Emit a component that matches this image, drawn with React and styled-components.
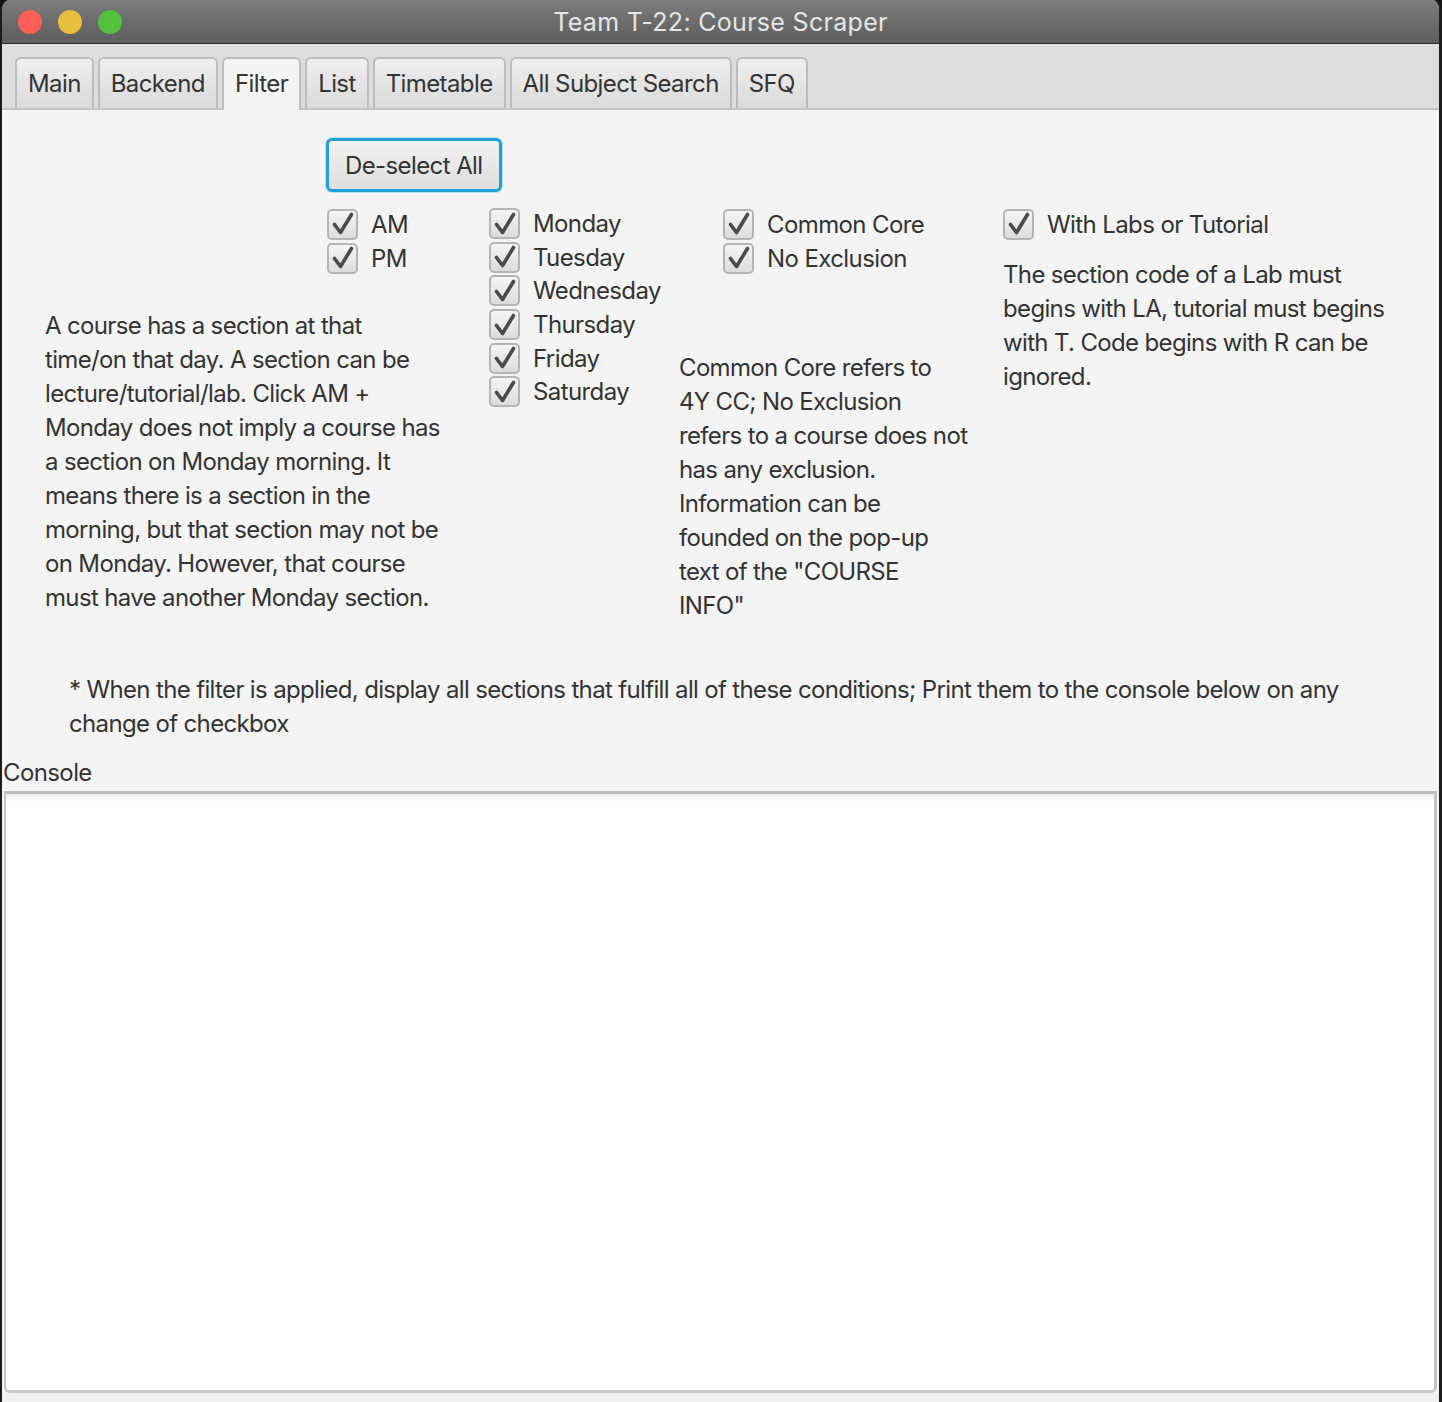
import React, { useState } from 'react';
import styled, { createGlobalStyle } from 'styled-components';

const GlobalStyle = createGlobalStyle`
  html, body {
    margin: 0;
    padding: 0;
    background: #151515;
  }
  body {
    font-family: Inter, "Noto Sans", "Liberation Sans", sans-serif;
    color: #333333;
  }
`;

const TABS = ['Main', 'Backend', 'Filter', 'List', 'Timetable', 'All Subject Search', 'SFQ'];

const LEFT_TEXT = [
  'A course has a section at that',
  'time/on that day. A section can be',
  'lecture/tutorial/lab. Click AM +',
  'Monday does not imply a course has',
  'a section on Monday morning. It',
  'means there is a section in the',
  'morning, but that section may not be',
  'on Monday. However, that course',
  'must have another Monday section.',
];

const MIDDLE_TEXT = [
  'Common Core refers to',
  '4Y CC; No Exclusion',
  'refers to a course does not',
  'has any exclusion.',
  'Information can be',
  'founded on the pop-up',
  'text of the "COURSE',
  'INFO"',
];

const RIGHT_TEXT = [
  'The section code of a Lab must',
  'begins with LA, tutorial must begins',
  'with T. Code begins with R can be',
  'ignored.',
];

const NOTE_TEXT = [
  '* When the filter is applied, display all sections that fulfill all of these conditions; Print them to the console below on any',
  'change of checkbox',
];

const Window = styled.div`
  width: 1442px;
  height: 1402px;
  box-sizing: border-box;
  display: flex;
  flex-direction: column;
  background: #f4f4f4;
  border-left: 2px solid #1c1c1c;
  border-right: 3px solid #1c1c1c;
  border-top-left-radius: 10px;
  border-top-right-radius: 10px;
  overflow: hidden;
`;

const TitleBar = styled.div`
  position: relative;
  height: 43px;
  flex: none;
  display: flex;
  align-items: center;
  justify-content: center;
  background: linear-gradient(#7c7c7c, #5d5d5d);
  border-bottom: 1px solid #2b2b2b;
`;

const Lights = styled.div`
  position: absolute;
  left: 16px;
  top: 10px;
  display: flex;
  gap: 16px;
`;

const Light = styled.span`
  width: 24px;
  height: 24px;
  border-radius: 50%;
  background: ${p => p.color};
`;

const Title = styled.div`
  font-size: 25px;
  color: #e6e6e6;
  letter-spacing: 0.3px;
`;

const TabBar = styled.div`
  flex: none;
  height: 66px;
  box-sizing: border-box;
  padding: 0 0 0 13px;
  display: flex;
  align-items: flex-end;
  gap: 4px;
  background: #dddddd;
  border-bottom: 2px solid #c4c4c4;
`;

const Tab = styled.div`
  height: ${p => (p.active ? '53px' : '51px')};
  margin-bottom: ${p => (p.active ? '-2px' : '0')};
  box-sizing: border-box;
  padding: 0 11px;
  display: flex;
  align-items: center;
  padding-bottom: ${p => (p.active ? '2px' : '0')};
  font-size: 24px;
  letter-spacing: -0.6px;
  color: #333333;
  border: 2px solid #bdbdbd;
  border-bottom: none;
  border-radius: 6px 6px 0 0;
  background: ${p => (p.active ? '#f4f4f4' : 'linear-gradient(#efefef, #dadada)')};
`;

const Content = styled.div`
  flex: 1;
  display: flex;
  flex-direction: column;
  padding-top: 28px;
  min-height: 0;
`;

const Toolbar = styled.div`
  padding-left: 324px;
  display: flex;
`;

const Button = styled.button`
  height: 54px;
  padding: 0 16px;
  font-family: inherit;
  font-size: 24px;
  letter-spacing: -0.6px;
  color: #333333;
  border: 3px solid #1f9ed8;
  border-radius: 6px;
  background: linear-gradient(#f2f2f2, #dedede);
  box-shadow: 0 0 0 1px #b9dff2;
`;

const Columns = styled.div`
  display: flex;
  margin-top: 15px;
`;

const Column = styled.div`
  width: ${p => p.w}px;
  flex: none;
  padding-left: ${p => p.pad || 0}px;
  box-sizing: border-box;
  display: flex;
  flex-direction: column;
`;

const CheckGroup = styled.div`
  display: flex;
  flex-direction: column;
  margin-left: ${p => p.indent || 0}px;
`;

const CheckRow = styled.label`
  height: ${p => p.h || 34}px;
  display: flex;
  align-items: center;
  gap: 13px;
  font-size: 24px;
  letter-spacing: -0.6px;
  color: #333333;
  white-space: nowrap;
  cursor: default;
`;

const Box = styled.span`
  width: 31px;
  height: 31px;
  box-sizing: border-box;
  flex: none;
  display: flex;
  align-items: center;
  justify-content: center;
  border: 2px solid #b4b4b4;
  border-radius: 5px;
  background: linear-gradient(#f5f5f5, #dcdcdc);
`;

const Paragraph = styled.div`
  margin-top: ${p => p.top || 0}px;
  font-size: 24px;
  line-height: 34px;
  letter-spacing: -0.65px;
  color: #333333;
  white-space: nowrap;
`;

const Line = styled.div``;

const Note = styled(Paragraph)`
  padding-left: 67px;
`;

const ConsoleLabel = styled.div`
  margin-top: 15px;
  padding-left: 1px;
  font-size: 24px;
  line-height: 34px;
  letter-spacing: -0.6px;
  color: #333333;
`;

const ConsoleArea = styled.div`
  flex: 1;
  margin: 1px 2px 0 2px;
  background: #ffffff;
  border-top: 3px solid #bdbdbd;
  border-right: 3px solid #c4c4c4;
  border-bottom: 3px solid #c8c8c8;
  border-left: 2px solid #c4c4c4;
  border-radius: 0 0 6px 6px;
  box-shadow: inset 0 6px 6px -4px #e4e4e4;
`;

const BottomStrip = styled.div`
  height: 9px;
  flex: none;
  background: #f0f0f0;
`;

const CheckMark = () => (
  <svg width="24" height="24" viewBox="0 0 24 24">
    <path d="M3.5 12.5 L9.5 20.5 L20.5 2.5" fill="none" stroke="#4a4a4a" strokeWidth="3.6" strokeLinejoin="round" strokeLinecap="round" />
  </svg>
);

const Check = ({ label, checked, onToggle, h }) => (
  <CheckRow h={h} onClick={onToggle}>
    <Box>{checked && <CheckMark />}</Box>
    {label}
  </CheckRow>
);

const Lines = ({ lines }) => lines.map((l, i) => <Line key={i}>{l}</Line>);

const ALL = ['AM', 'PM', 'Monday', 'Tuesday', 'Wednesday', 'Thursday', 'Friday', 'Saturday', 'Common Core', 'No Exclusion', 'With Labs or Tutorial'];

export default function App() {
  const [checked, setChecked] = useState(() => Object.fromEntries(ALL.map(k => [k, true])));
  const toggle = k => () => setChecked(c => ({ ...c, [k]: !c[k] }));
  const group = (keys, h) => keys.map(k => <Check key={k} label={k} h={h} checked={checked[k]} onToggle={toggle(k)} />);

  return (
    <>
      <GlobalStyle />
      <Window>
        <TitleBar>
          <Lights>
            <Light color="#fe5f57" />
            <Light color="#e7be3d" />
            <Light color="#54c03d" />
          </Lights>
          <Title>Team T-22: Course Scraper</Title>
        </TitleBar>
        <TabBar>
          {TABS.map(t => (
            <Tab key={t} active={t === 'Filter'}>{t}</Tab>
          ))}
        </TabBar>
        <Content>
          <Toolbar>
            <Button onClick={() => setChecked(Object.fromEntries(ALL.map(k => [k, false])))}>De-select All</Button>
          </Toolbar>
          <Columns>
            <Column w={487} pad={43}>
              <CheckGroup indent={282}>{group(['AM', 'PM'])}</CheckGroup>
              <Paragraph top={34}><Lines lines={LEFT_TEXT} /></Paragraph>
            </Column>
            <Column w={190}>
              <CheckGroup>{group(['Monday', 'Tuesday', 'Wednesday', 'Thursday', 'Friday', 'Saturday'], 33.6)}</CheckGroup>
            </Column>
            <Column w={324}>
              <CheckGroup indent={44}>{group(['Common Core', 'No Exclusion'])}</CheckGroup>
              <Paragraph top={76}><Lines lines={MIDDLE_TEXT} /></Paragraph>
            </Column>
            <Column w={420}>
              <CheckGroup>{group(['With Labs or Tutorial'])}</CheckGroup>
              <Paragraph top={17}><Lines lines={RIGHT_TEXT} /></Paragraph>
            </Column>
          </Columns>
          <Note top={50}><Lines lines={NOTE_TEXT} /></Note>
          <ConsoleLabel>Console</ConsoleLabel>
          <ConsoleArea />
          <BottomStrip />
        </Content>
      </Window>
    </>
  );
}
